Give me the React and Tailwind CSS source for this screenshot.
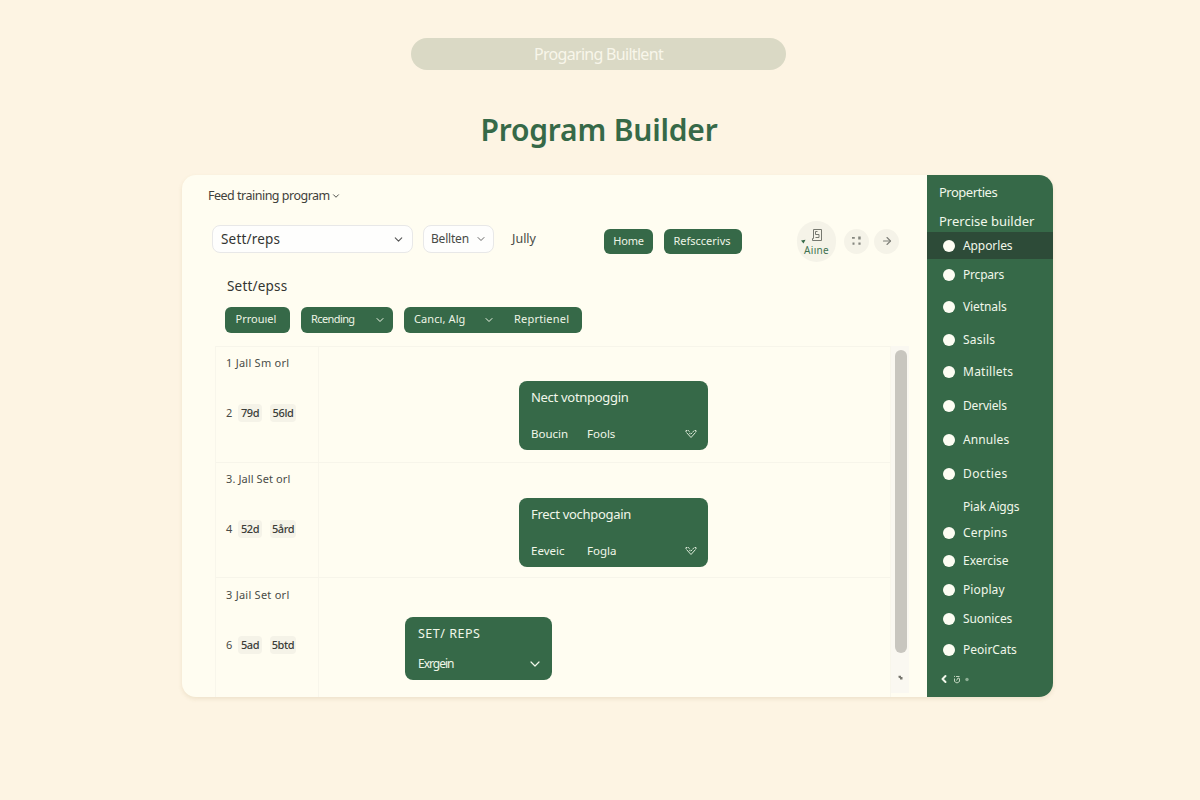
import React from 'react';
import { ChevronDown, ChevronLeft, ArrowRight } from 'lucide-react';
import clsx from 'clsx';

const NAV_ITEMS = [
  { label: 'Apporles', height: 'h-[27px]', spacing: 'tracking-[-0.1px]', active: true },
  { label: 'Prcpars', height: 'h-8', spacing: 'tracking-[-0.2px]' },
  { label: 'Vietnals', height: 'h-[31px]', spacing: 'tracking-[-0.1px]' },
  { label: 'Sasils', height: 'h-9', spacing: 'tracking-[0.2px]' },
  { label: 'Matillets', height: 'h-7', spacing: 'tracking-[0.25px]' },
  { label: 'Derviels', height: 'h-10', spacing: 'tracking-[-0.2px]' },
  { label: 'Annules', height: 'h-7', spacing: 'tracking-[0.1px]' },
  { label: 'Docties', height: 'h-10', spacing: 'tracking-[0.4px]' },
  { label: 'Piak Aiggs', height: 'h-[26px]', spacing: 'tracking-[-0.15px]', noDot: true },
  { label: 'Cerpins', height: 'h-[25px]', spacing: 'tracking-[0.2px]' },
  { label: 'Exercise', height: 'h-8', spacing: 'tracking-[0px]' },
  { label: 'Pioplay', height: 'h-[26px]', spacing: 'tracking-[0.1px]' },
  { label: 'Suonices', height: 'h-8', spacing: 'tracking-[-0.1px]' },
  { label: 'PeoirCats', height: 'h-[30px]', spacing: 'tracking-[0px]' },
];

const ROWS = [
  { title: '1 Jall Sm orl', spacing: 'mt-[7px] tracking-[0.25px]', num: '2', tags: ['79d', '56ld'], height: 'h-[116px]' },
  { title: '3. Jall Set orl', spacing: 'mt-[7px] tracking-[0.1px]', num: '4', tags: ['52d', '5ård'], height: 'h-[115px]' },
  { title: '3 Jail Set orl', spacing: 'mt-2 tracking-[0.25px]', num: '6', tags: ['5ad', '5btd'], height: 'h-[120px]' },
];

function Chip({ className, children }) {
  return (
    <div className={clsx('flex items-center rounded-md bg-[#366948] text-[11px] text-[#eef5e6]', className)}>
      {children}
    </div>
  );
}

function HeartCheck() {
  return (
    <svg width="12" height="10" viewBox="0 0 12 10" fill="none" stroke="#dcead8" strokeWidth="1">
      <path d="M1.500 3.500L6 8.500l4.500-5" />
      <path d="M1 3V1.500h2.500L5 3.500M11 3V1.500H9.200L6 5 4 4.500" strokeDasharray="2.500 .6" />
    </svg>
  );
}

function WorkoutCard({ title, left, right }) {
  return (
    <div className="flex h-[69px] w-[189px] flex-col rounded-lg bg-[#366948] pl-3 pr-[11px] text-[#f1f7ea]">
      <div className="mt-[7px] h-[19px] text-[13px] leading-[19px] tracking-[-0.3px]">{title}</div>
      <div className="mt-[18px] flex h-[18px] items-center text-[11.5px] leading-[18px] tracking-[0px]">
        <span className="w-14">{left}</span>
        <span className="flex-1">{right}</span>
        <HeartCheck />
      </div>
    </div>
  );
}

function Toolbar() {
  return (
    <div className="flex h-12 items-center pl-[30px]">
      <div className="mb-1 flex h-7 w-[201px] items-center justify-between rounded-lg border border-[#e8e8e8] bg-[#fefefd] pl-2 pr-[7px] text-[13.5px] text-[#333531]">
        <span className="tracking-[0.2px]">Sett/reps</span>
        <ChevronDown size={13} strokeWidth={2} className="text-[#555]" />
      </div>
      <div className="mb-1 ml-[10px] flex h-7 w-[71px] items-center justify-between rounded-lg border border-[#e8e8e8] bg-[#fefefd] pl-[7px] pr-[6px] text-[12px] text-[#484a46]">
        <span className="tracking-[-0.2px]">Bellten</span>
        <ChevronDown size={12} strokeWidth={2} className="text-[#666]" />
      </div>
      <span className="mb-1 ml-[18px] w-[92px] text-[12.5px] text-[#484a46]">Jully</span>
      <Chip className="h-[25px] w-[49px] justify-center tracking-[-0.2px]">Home</Chip>
      <Chip className="ml-[11px] h-[25px] w-[78px] justify-center pr-[2px]">Refsccerivs</Chip>
      <div className="relative ml-[55px] flex h-[41px] w-[39px] flex-col items-center rounded-full bg-[#f5f3e8] pt-[7px]">
        <svg className="shrink-0" width="12" height="14" viewBox="0 0 12 14" fill="none" stroke="#777970" strokeWidth="1">
          <path d="M2.500 1.500h8v11h-9v-2h1zM4.500 3.500v3H8v3H4.500M4.500 3.500h2" />
        </svg>
        <span className="mt-px text-[10px] leading-[14px] tracking-[0.3px] text-[#3f7250]">Aiıne</span>
        <svg className="absolute left-[4px] top-[18px]" width="5" height="5" viewBox="0 0 5 5">
          <path d="M0 1.500L4.500 .8 2.500 4.600z" fill="#366948" />
        </svg>
      </div>
      <div className="ml-2 flex size-[25px] items-center justify-center rounded-full bg-[#f5f3e8]">
        <svg width="11" height="10" viewBox="0 0 11 10" fill="#85877f">
          <path d="M1 1h2.800v1.800H1zM7.200 .5h2.500v3H7.200zM1.500 6.500h2v2.200h-2zM7.400 6.500h2.200v2.200H7.400z" />
        </svg>
      </div>
      <div className="ml-[5px] flex size-[25px] items-center justify-center rounded-full bg-[#f5f3e8]">
        <ArrowRight size={12} strokeWidth={2.2} className="text-[#7d7f77]" />
      </div>
    </div>
  );
}

function Filters() {
  return (
    <div className="flex h-[26px] pl-[43px]">
      <Chip className="w-[65px] justify-center pr-[3px] pb-px">Prrouıel</Chip>
      <Chip className="ml-[11px] w-[92px] justify-between pl-[10px] pr-[7px] pb-px">
        <span className="tracking-[-0.6px]">Rcending</span>
        <ChevronDown size={12} strokeWidth={2} />
      </Chip>
      <Chip className="ml-[11px] w-[178px] pl-[10px] pb-px">
        <span className="w-[69px] tracking-[0.1px]">Cancı, Alg</span>
        <ChevronDown size={12} strokeWidth={2} />
        <span className="ml-[19px] tracking-[0.2px]">Reprtienel</span>
      </Chip>
    </div>
  );
}

function Schedule() {
  return (
    <div className="ml-[33px] mt-[13px] flex h-[351px] w-[694px]">
      <div className="w-[676px] border-l border-r border-[#f8f6eb]">
        {ROWS.map((row, i) => (
          <div key={i} className={clsx('flex border-t border-[#f7f5ea]', row.height)}>
            <div className="w-[103px] border-r border-[#f8f6eb] pl-[10px] text-[#4a4c47]">
              <div className={clsx('text-[11px] leading-[18px]', row.spacing)}>{row.title}</div>
              <div className="mt-8 flex h-[18px] items-center text-[11px]">
                <span className="w-3">{row.num}</span>
                {row.tags.map((tag, j) => (
                  <span
                    key={tag}
                    className={clsx(
                      'flex h-[18px] items-center justify-center rounded bg-[#f5f3e8] font-medium tracking-[-0.4px] text-[#3b3d38]',
                      j === 0 ? 'w-[24px]' : 'ml-2 w-[26px]'
                    )}
                  >
                    {tag}
                  </span>
                ))}
              </div>
            </div>
            {i === 0 && <div className="pl-[200px] pt-[34px]"><WorkoutCard title="Nect votnpoggin" left="Boucin" right="Fools" /></div>}
            {i === 1 && <div className="pl-[200px] pt-[35px]"><WorkoutCard title="Frect vochpogain" left="Eeveic" right="Fogla" /></div>}
            {i === 2 && (
              <div className="pl-[86px] pt-[39px]">
                <div className="flex h-[63px] w-[147px] flex-col rounded-lg bg-[#366948] pl-[13px] pr-[9px] text-[#f1f7ea]">
                  <div className="mt-[7px] text-[12.5px] leading-[19px] tracking-[0.5px]">SET/ REPS</div>
                  <div className="mt-[11px] flex items-center justify-between text-[12px] leading-[19px]">
                    <span className="tracking-[-1px]">Exrgein</span>
                    <ChevronDown size={16} strokeWidth={1.800} />
                  </div>
                </div>
              </div>
            )}
          </div>
        ))}
      </div>

      {/* Scrollbar */}
      <div className="flex h-[347px] w-[18px] flex-col items-center bg-[#faf8f1] pl-px pt-1">
        <div className="h-[303px] w-3 rounded-full bg-[#c8c6bf]" />
        <svg className="mt-[22px]" width="5" height="5" viewBox="0 0 5 5" fill="#77766f">
          <path d="M.5 .8h2.500v1.200H4.500v2.500H2V3.200L.5 2.500z" />
        </svg>
      </div>
    </div>
  );
}

function Sidebar() {
  return (
    <aside className="flex w-[126px] flex-col rounded-r-[14px] bg-[#366948] text-[#f1f7ea]">
      <div className="h-[35px] pl-3 text-[13px] leading-[35px] tracking-[-0.5px]">Properties</div>
      <div className="h-[22px] pl-3 text-[13px] leading-[22px]">Prercise builder</div>
      {NAV_ITEMS.map(item => (
        <div
          key={item.label}
          className={clsx('flex shrink-0 items-center pl-4 text-[12px]', item.height, item.active && 'bg-[#2d4b38]')}
        >
          <span className={clsx('mr-2 size-3 rounded-full', !item.noDot && 'bg-[#fdfdf3]')} />
          <span className={item.spacing}>{item.label}</span>
        </div>
      ))}
      <div className="flex h-7 items-center pl-[11px]">
        <ChevronLeft size={12} strokeWidth={4} />
        <svg className="ml-[3px]" width="18" height="9" viewBox="0 0 18 9" fill="none" stroke="#c3d6c0" strokeWidth="1">
          <path d="M1 1l1 .8M1.500 3.500v3L4 8l2.500-1.500v-3L5 3 3.500 5.500M3 1.500h3.500" />
          <circle cx="14" cy="4.500" r="1.700" fill="#8fb096" stroke="none" />
        </svg>
      </div>
    </aside>
  );
}

export default function App() {
  return (
    <div className="h-screen w-full overflow-hidden bg-[#fdf4e3] pt-[38px] font-['Noto_Sans',sans-serif]">
      <div className="ml-[411px] flex h-8 w-[375px] items-center justify-center rounded-full bg-[#dad9c5] text-[16px] tracking-[-0.7px] text-[#f8f6ea]">
        Progaring Builtlent
      </div>
      <h1 className="ml-[411px] mt-[38px] h-11 w-[376px] text-center text-[30px] font-semibold leading-[44px] tracking-[-0.2px] text-[#366948]">
        Program Builder
      </h1>

      <div className="ml-[182px] mt-[23px] flex h-[522px] w-[871px] rounded-[14px] bg-[#fffdf1] shadow-[0_2px_4px_rgba(150,120,60,0.14)]">
        <main className="w-[745px]">
          <div className="flex h-[42px] items-center pl-[26px] text-[12.5px] text-[#3f413c]">
            <span className="tracking-[-0.5px]">Feed training program</span>
            <ChevronDown size={10} strokeWidth={2.200} className="ml-px" />
          </div>
          <Toolbar />
          <div className="h-[42px] pl-[45px] text-[13.5px] leading-[42px] tracking-[0.2px] text-[#333531]">Sett/epss</div>
          <Filters />
          <Schedule />
        </main>
        <Sidebar />
      </div>
    </div>
  );
}
